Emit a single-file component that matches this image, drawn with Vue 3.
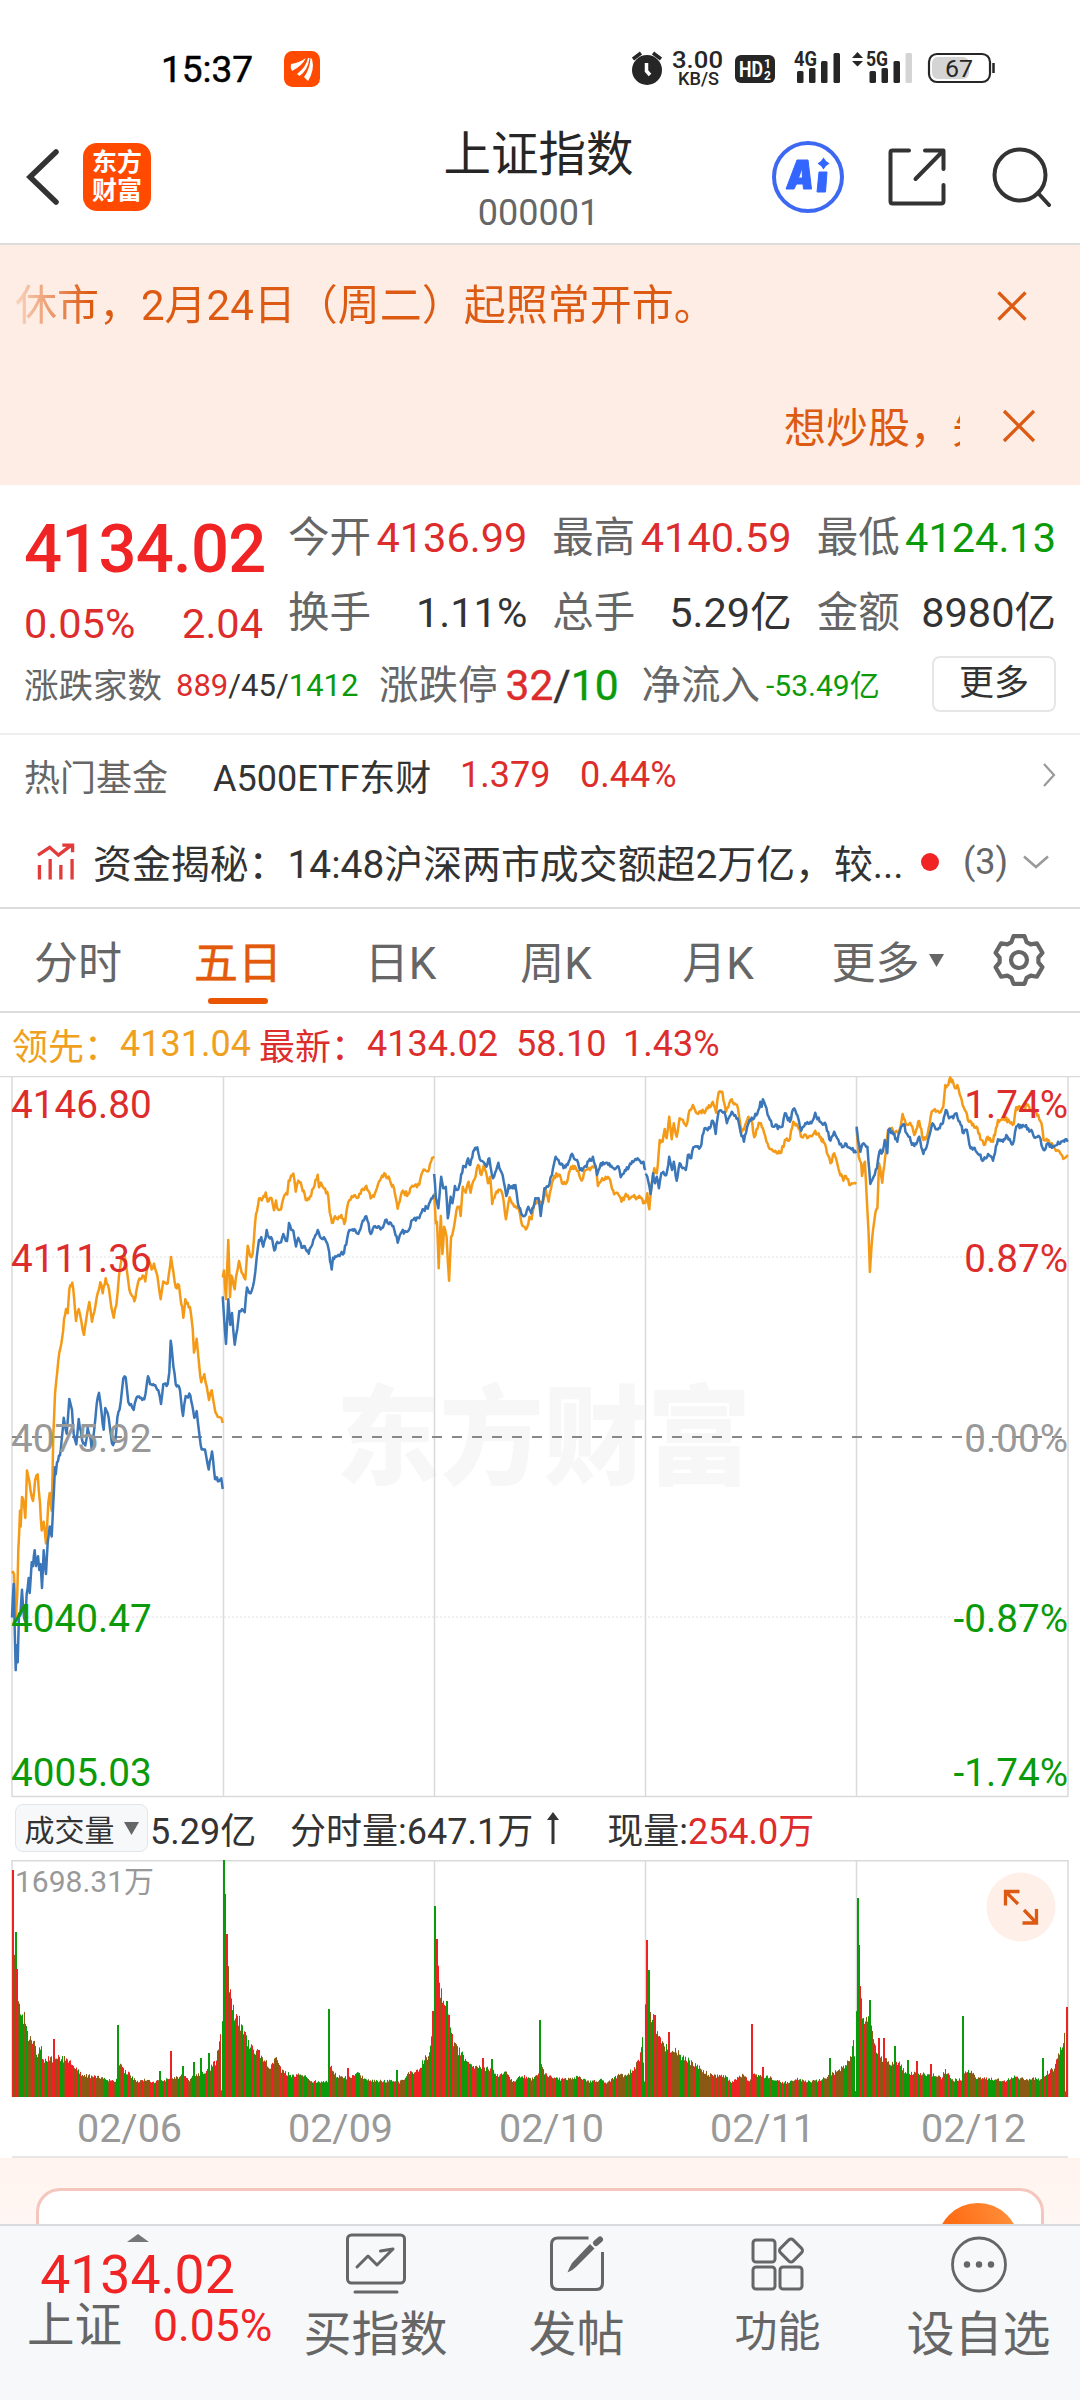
<script setup>
const quotes = [
  { label: "今开", value: "4136.99", tone: "up" },
  { label: "最高", value: "4140.59", tone: "up" },
  { label: "最低", value: "4124.13", tone: "down" },
  { label: "换手", value: "1.11%", tone: "" },
  { label: "总手", value: "5.29亿", tone: "" },
  { label: "金额", value: "8980亿", tone: "" },
];

const tabs = ["分时", "五日", "日K", "周K", "月K"];
const activeTab = "五日";

const axisLeft = [
  { text: "4146.80", tone: "up" },
  { text: "4111.36", tone: "up" },
  { text: "4075.92", tone: "flat" },
  { text: "4040.47", tone: "down" },
  { text: "4005.03", tone: "down" },
];
const axisRight = [
  { text: "1.74%", tone: "up" },
  { text: "0.87%", tone: "up" },
  { text: "0.00%", tone: "flat" },
  { text: "-0.87%", tone: "down" },
  { text: "-1.74%", tone: "down" },
];
const dates = ["02/06", "02/09", "02/10", "02/11", "02/12"];
const dayLines = [223.5, 434.5, 645.5, 856.5];

// small repeatable noise, so the curves look like minute data
function noise(i) {
  const v = Math.sin(i * 127.1 + 11.7) * 43758.5453;
  return v - Math.floor(v);
}

const early = { x: 0, y: -16, sx: 1 / 3, sy: 0.3954 };
const late = { x: 430, y: -16, sx: 0.4146, sy: 1 / 3 };

const leadDays = [
  [early, "36,1298 42,1300 48,1408 52,1350 55,1240 60,1140 62,1180 66,1105 72,1125 76,1158 81,1038 88,1065 92,1092 99,1115 105,1065 113,1048 120,1120 125,1190 131,1168 138,1223 145,1120 149,1095 155,1140 160,950 165,845 175,760 187,700 192,655 198,630 203,640 208,580 217,563 222,600 228,660 236,630 244,660 252,695 258,660 268,612 276,662 290,600 301,562 308,590 317,552 327,580 334,625 341,652 349,620 357,545 365,500 373,490 380,530 388,580 403,610 415,560 428,545 436,560 445,500 455,530 462,515 472,545 482,605 490,560 503,565 513,498 527,575 537,570 550,652 556,605 570,625 578,680 582,740 590,705 598,775 604,815 613,795 627,860 635,835 646,890 657,903 664,905 668,918"],
  [early, "668,550 672,532 678,605 685,455 690,600 694,545 704,580 710,540 717,508 725,538 736,555 743,470 750,495 758,490 768,390 777,350 785,355 797,335 803,358 815,350 822,380 828,355 834,378 843,378 852,345 862,340 866,305 880,287 887,333 895,305 905,320 914,340 921,355 930,345 940,325 953,290 957,322 963,310 975,325 985,345 989,385 996,412 1005,395 1013,403 1024,392 1033,415 1045,360 1058,347 1075,348 1085,328 1099,318 1112,350 1125,337 1140,305 1156,288 1170,305 1182,325 1193,376 1205,335 1225,338 1237,318 1258,315 1268,282 1283,282 1297,247 1303,245"],
  [late, "10,400 14,490 17,485 21,625 26,468 30,582 34,500 40,530 46,662 51,530 58,500 64,450 71,440 74,468 79,380 86,398 93,365 98,398 104,365 110,350 116,315 124,345 130,315 140,370 145,350 150,432 158,402 168,390 175,405 183,478 192,412 203,440 212,440 220,485 228,500 234,503 240,470 245,478 252,430 260,420 266,425 272,430 279,388 286,425 292,385 299,348 313,345 321,372 330,368 340,320 352,325 366,362 375,330 400,320 405,378 415,355 432,355 444,403 455,405 462,425 470,408 485,412 500,412 512,418 519,432"],
  [late, "519,430 524,400 529,448 535,370 541,325 547,340 554,240 561,245 566,207 571,235 577,170 583,238 588,190 595,230 602,175 610,180 618,198 624,160 634,135 647,162 660,155 670,145 682,125 690,158 696,98 705,95 714,155 722,130 728,118 735,130 743,145 752,215 760,195 768,170 775,180 782,232 793,188 803,205 817,262 830,275 847,278 856,240 868,238 876,185 887,200 897,232 915,228 929,212 940,232 952,250 966,310 975,280 985,325 997,362 1003,348 1014,375 1028,372"],
  [late, "1029,205 1034,290 1040,310 1042,348 1049,305 1054,430 1058,520 1061,636 1066,540 1074,460 1079,445 1083,310 1091,368 1098,290 1105,210 1112,205 1120,220 1130,218 1135,200 1140,162 1150,195 1158,188 1168,225 1180,183 1190,240 1200,225 1210,155 1220,155 1229,158 1238,140 1243,75 1250,75 1255,52 1265,82 1272,75 1280,110 1290,150 1300,185 1318,200 1330,240 1336,255 1345,230 1358,245 1370,180 1385,172 1400,190 1408,192 1414,142 1430,150 1440,135 1452,150 1462,155 1475,190 1480,240 1492,240 1505,262 1520,280 1530,295 1538,285"],
];

const priceDays = [
  [early, "36,1410 41,1325 44,1440 47,1543 50,1480 53,1523 57,1400 61,1405 66,1340 72,1410 76,1420 80,1350 86,1310 89,1348 95,1270 99,1280 104,1240 108,1280 114,1255 118,1290 122,1275 126,1335 131,1240 138,1300 143,1220 149,1180 155,1205 160,1120 165,1030 167,1048 171,1018 180,1000 185,960 191,905 200,945 208,857 216,885 221,945 229,972 236,908 246,960 256,975 263,930 270,950 275,985 282,940 290,870 297,842 305,895 311,935 316,880 326,905 336,970 346,965 352,905 362,865 370,805 377,803 385,865 393,870 401,885 408,858 420,855 433,858 444,800 450,820 460,820 475,835 483,870 490,820 503,820 508,790 512,710 517,745 527,820 540,835 549,900 557,850 571,848 583,905 590,888 600,960 605,985 615,985 626,1036 636,990 645,1060 660,1062 664,1058 668,1085"],
  [early, "668,598 678,718 685,605 691,670 696,640 704,720 712,680 718,635 726,630 734,638 741,575 752,590 762,560 770,500 777,455 784,448 790,472 800,430 806,448 817,455 823,482 832,460 840,462 850,440 861,458 867,412 874,430 880,432 888,472 895,450 908,475 917,478 926,490 940,455 953,430 962,450 975,452 985,475 990,508 995,530 999,500 1015,493 1032,488 1045,437 1060,432 1075,440 1085,415 1099,395 1112,440 1125,420 1145,425 1156,405 1180,420 1193,462 1205,435 1225,432 1237,405 1258,400 1268,377 1280,375 1297,350 1303,345"],
  [late, "10,342 14,412 20,445 27,350 32,385 38,380 43,475 50,410 54,430 60,378 66,390 73,365 80,318 86,322 92,295 97,315 104,275 114,262 120,298 128,305 136,320 143,295 152,355 165,308 175,345 184,408 190,375 199,385 206,375 212,430 220,460 228,468 237,440 244,460 254,415 262,415 267,468 276,385 285,380 294,345 303,290 310,300 322,325 332,315 340,285 352,300 362,330 375,318 393,290 403,345 412,310 430,315 445,328 455,320 460,352 470,330 485,312 498,300 515,305 519,330"],
  [late, "519,345 524,350 532,402 538,340 543,370 547,350 552,385 558,340 570,345 577,290 584,330 588,305 595,362 602,310 609,325 617,330 622,285 630,295 635,262 652,262 662,205 675,205 682,182 689,222 696,155 710,155 716,190 728,155 742,175 749,215 757,245 765,200 773,182 782,175 792,150 797,125 800,140 803,118 817,170 828,200 850,200 856,160 868,185 876,148 886,165 895,212 905,190 920,190 929,158 940,185 952,188 966,242 975,215 985,240 994,262 1002,250 1014,265 1025,272 1028,280"],
  [late, "1029,200 1033,245 1038,275 1046,250 1055,260 1062,372 1070,350 1078,325 1084,275 1092,275 1097,240 1103,280 1106,210 1115,215 1127,245 1133,215 1142,192 1152,225 1168,258 1180,230 1190,282 1200,250 1212,190 1222,208 1237,190 1244,150 1252,175 1262,175 1270,160 1280,195 1287,220 1295,210 1304,265 1316,272 1325,285 1335,300 1346,282 1358,302 1370,238 1382,245 1390,225 1406,252 1414,200 1430,195 1443,205 1455,225 1470,230 1480,270 1490,250 1505,260 1515,245 1530,245 1538,245"],
];

function toLine([box, raw], seed) {
  const pts = raw.split(" ").map((p) => {
    const [x, y] = p.split(",").map(Number);
    return [box.x + x * box.sx, box.y + y * box.sy];
  });
  const out = [pts[0]];
  for (let i = 1; i < pts.length; i++) {
    const [x0, y0] = pts[i - 1];
    const [x1, y1] = pts[i];
    const steps = Math.max(1, Math.round((x1 - x0) / 1.1));
    for (let s = 1; s < steps; s++) {
      const t = s / steps;
      const wobble = (noise(seed * 999 + i * 17 + s) - 0.5) * 5;
      out.push([x0 + (x1 - x0) * t, y0 + (y1 - y0) * t + wobble]);
    }
    out.push([x1, y1]);
  }
  return out.map(([x, y]) => `${x.toFixed(1)},${y.toFixed(1)}`).join(" ");
}

const leadLines = leadDays.map((d, i) => toLine(d, i + 1));
const priceLines = priceDays.map((d, i) => toLine(d, i + 21));

// volume envelope: x,height
const volumeProfile =
  "35,93 38,153 42,153 45,150 48,128 51,107 54,100 58,87 63,78 68,79 75,73 80,57 100,55 106,43 118,48 125,38 155,37 170,40 190,37 215,32 235,22 280,20 320,16 341,17 347,33 360,26 375,23 395,15 425,18 445,15 480,17 500,19 530,21 550,16 562,22 585,24 605,27 625,35 635,50 638,61 641,61 642,3 644,3 645,92 650,237 654,198 657,143 660,143 664,120 668,103 675,88 682,79 690,79 700,70 712,58 730,48 750,43 770,35 785,30 800,40 815,27 840,22 880,22 900,16 945,15 953,16 960,31 975,21 1010,19 1035,24 1060,17 1100,16 1145,16 1160,15 1185,23 1210,26 1230,36 1245,43 1250,60 1254,62 1255,3 1257,3 1258,86 1263,150 1268,145 1272,135 1278,103 1285,97 1290,87 1297,88 1304,80 1310,60 1325,48 1345,41 1365,31 1400,30 1430,26 1445,21 1470,24 1490,15 1510,21 1545,18 1565,23 1573,33 1580,23 1608,18 1643,18 1678,20 1713,15 1748,17 1763,14 1800,23 1818,21 1843,30 1856,37 1864,55 1867,55 1868,3 1870,3 1872,86 1877,120 1883,120 1885,97 1893,75 1902,78 1905,67 1918,53 1943,48 1963,45 1988,38 2013,33 2033,28 2058,22 2108,20 2123,15 2153,22 2180,16 2188,22 2228,20 2258,16 2288,14 2313,18 2343,15 2368,16 2403,20 2418,23 2448,30 2468,37 2477,53 2480,53 2481,3 2483,3 2485,82 2490,128 2495,128 2498,98 2504,83 2513,77 2525,90 2530,68 2538,50 2553,40 2566,38 2583,33 2613,33 2628,23 2663,25 2688,22 2718,22 2733,18 2743,27 2763,17 2794,17 2800,23 2818,26 2838,18 2893,18 2913,15 2943,20 2978,18 3018,18 3033,23 3058,28 3073,42 3085,50 3091,62 3093,3 3095,3 3097,90 3101,90"
    .split(" ")
    .map((p) => p.split(",").map(Number));
const spikes = [
  { x: 38, h: 227, up: true },
  { x: 45, h: 165, up: false },
  { x: 48, h: 128, up: true },
  { x: 157, h: 58, up: true },
  { x: 343, h: 72, up: false },
  { x: 464, h: 26, up: false },
  { x: 495, h: 46, up: true },
  { x: 530, h: 31, up: false },
  { x: 563, h: 35, up: false },
  { x: 584, h: 39, up: false },
  { x: 605, h: 44, up: false },
  { x: 654, h: 198, up: false },
  { x: 651, h: 237, up: false },
  { x: 660, h: 163, up: true },
  { x: 712, h: 65, up: true },
  { x: 753, h: 47, up: true },
  { x: 955, h: 88, up: false },
  { x: 1010, h: 29, up: true },
  { x: 1151, h: 27, up: false },
  { x: 1258, h: 86, up: true },
  { x: 1263, h: 191, up: false },
  { x: 1269, h: 158, up: true },
  { x: 1298, h: 96, up: false },
  { x: 1304, h: 82, up: true },
  { x: 1401, h: 39, up: true },
  { x: 1429, h: 38, up: false },
  { x: 1569, h: 77, up: false },
  { x: 1877, h: 157, up: true },
  { x: 1883, h: 127, up: false },
  { x: 1902, h: 82, up: true },
  { x: 1943, h: 65, up: true },
  { x: 2182, h: 73, up: true },
  { x: 2215, h: 30, up: true },
  { x: 2411, h: 39, up: false },
  { x: 2490, h: 199, up: false },
  { x: 2495, h: 152, up: false },
  { x: 2525, h: 97, up: false },
  { x: 2551, h: 59, up: true },
  { x: 2566, h: 59, up: true },
  { x: 2598, h: 51, up: false },
  { x: 2636, h: 37, up: false },
  { x: 2661, h: 36, up: true },
  { x: 2703, h: 33, up: true },
  { x: 2796, h: 81, up: false },
  { x: 3027, h: 39, up: false },
  { x: 3098, h: 90, up: true },
];

const RED = "#ee2222";
const GREEN = "#0a9a0a";
const MIXED = "#8a5a14";

function buildVolume() {
  const bars = [];
  let k = 0;
  for (let n = 0; n < 1055; n++) {
    const px = 35 + n * 2.904;
    while (k < volumeProfile.length - 2 && volumeProfile[k + 1][0] < px) k++;
    const [x0, h0] = volumeProfile[k];
    const [x1, h1] = volumeProfile[k + 1];
    const t = Math.min(1, (px - x0) / (x1 - x0));
    let h = h0 + (h1 - h0) * t;
    if (h > 8) h *= 0.9 + noise(n + 400) * 0.2;
    const trend = noise(Math.floor(n / 7) + 70) * 0.24 - 0.12;
    const pick = noise(n) + trend;
    const fill = pick < 0.3 ? RED : pick > 0.7 ? GREEN : MIXED;
    bars.push({ x: 12 + n, h: Math.min(237, h), w: 1, fill });
  }
  for (const s of spikes) {
    bars.push({ x: Math.round(s.x / 2.904 - 0.8), h: s.h, w: 2, fill: s.up ? RED : GREEN });
  }
  return bars;
}
const volumeBars = buildVolume();

function gearPath() {
  const pts = [];
  for (let k = 0; k < 6; k++) {
    for (const [r, d] of [[19.5, -23], [24.5, -13], [24.5, 13], [19.5, 23]]) {
      const a = ((k * 60 - 90 + d) * Math.PI) / 180;
      pts.push(`${(28 + r * Math.cos(a)).toFixed(1)} ${(28 + r * Math.sin(a)).toFixed(1)}`);
    }
  }
  return `M${pts.join("L")}Z`;
}
const gear = gearPath();
</script>

<template>
  <div class="page">
    <div class="status-bar">
      <span class="clock">15:37</span>
      <svg class="push-icon" viewBox="0 0 36 36">
        <rect width="36" height="36" rx="8.5" fill="#ff4a00" />
        <path d="M7 13Q15 12 22 7Q18 15 8 20Q6 17 7 13Z" fill="#fff" />
        <path d="M24 7Q22 16 13 23L15.500 25Q24 19 25.500 7Z" fill="#fff" />
        <path d="M26.500 7Q26 18 20 26L24 30Q31 19 28 8Z" fill="#fff" />
      </svg>
      <svg class="status-icons" viewBox="632 40 364 60">
        <g fill="#262626">
          <circle cx="647" cy="71" r="15" />
          <path d="M633 60L641 54M661 60L653 54" stroke="#262626" stroke-width="3.500" />
          <path d="M646.500 64V72L650 76" stroke="#fff" stroke-width="3.500" fill="none" />
          <text x="672" y="69" font-size="24" font-weight="500" textLength="51" lengthAdjust="spacingAndGlyphs">3.00</text>
          <text x="678" y="86" font-size="17.500" font-weight="500" textLength="41" lengthAdjust="spacingAndGlyphs">KB/S</text>
          <rect x="735" y="56" width="40" height="28" rx="6" />
          <text x="739" y="78" font-size="22" font-weight="700" fill="#fff" textLength="24" lengthAdjust="spacingAndGlyphs">HD</text>
          <text x="764" y="69" font-size="12" font-weight="700" fill="#fff">1</text>
          <text x="764" y="81" font-size="12" font-weight="700" fill="#fff">2</text>
          <text x="794" y="67" font-size="20" font-weight="700" textLength="23" lengthAdjust="spacingAndGlyphs">4G</text>
          <rect x="797" y="72" width="6.500" height="12" rx="1.500" />
          <rect x="809" y="69" width="6.500" height="15" rx="1.500" />
          <rect x="821" y="62" width="6.500" height="22" rx="1.500" />
          <rect x="833.500" y="54" width="6.500" height="30" rx="1.500" />
          <path d="M852 59L857.500 53L863 59ZM852 62L857.500 67.500L863 62Z" />
          <text x="866" y="67" font-size="20" font-weight="700" textLength="22" lengthAdjust="spacingAndGlyphs">5G</text>
          <rect x="869.500" y="72" width="6.500" height="12" rx="1.500" />
          <rect x="881.500" y="69" width="6.500" height="15" rx="1.500" />
          <rect x="893.500" y="62" width="6.500" height="22" rx="1.500" />
          <rect x="905.500" y="54" width="6.500" height="30" rx="1.500" fill="#d4d4d4" />
          <rect x="932" y="58" width="37" height="22" rx="6" fill="#d4d4d4" />
          <rect x="929" y="55" width="61" height="28" rx="8" fill="none" stroke="#262626" stroke-width="2.200" />
          <path d="M993.500 64V74" stroke="#262626" stroke-width="2.500" />
          <text x="945" y="78" font-size="24" textLength="28" lengthAdjust="spacingAndGlyphs">67</text>
        </g>
      </svg>
    </div>

    <header class="header">
      <div class="header-side">
        <svg class="back" viewBox="0 0 36 60">
          <path d="M31 5L5 30L31 55" fill="none" stroke="#333" stroke-width="5.500" stroke-linecap="round" />
        </svg>
        <div class="brand">
          <span>东方</span>
          <span>财富</span>
        </div>
      </div>
      <div class="title-box">
        <h1 class="title">上证指数</h1>
        <span class="code">000001</span>
      </div>
      <div class="header-side header-actions">
        <svg width="72" height="72" viewBox="0 0 72 72">
          <circle cx="36" cy="36" r="34" fill="none" stroke="#3d68f2" stroke-width="4" />
          <path d="M25 19H36L39.500 48H31.500L31 43H24.500L22 48H14ZM30 27L26.500 37H30.500Z" fill="#3366ff" fill-rule="evenodd" stroke="#3366ff" stroke-linejoin="round" />
          <path d="M47 31H55L53.500 51H45Z" fill="#3366ff" stroke="#3366ff" stroke-linejoin="round" />
          <path d="M51.500 16.500L54 20L57.500 22.500L54 25L51.500 28.500L49 25L45.500 22.500L49 20Z" fill="#3366ff" />
        </svg>
        <svg width="58" height="58" viewBox="0 0 58 58" fill="none" stroke="#333" stroke-width="4" stroke-linecap="round" stroke-linejoin="round">
          <path d="M21 2.500H4.500Q2.500 2.500 2.500 4.500V53Q2.500 55.500 4.500 55.500H53Q55.500 55.500 55.500 53V37" />
          <path d="M37 2.500H55.500V21M54 4L27.500 31" />
        </svg>
        <svg width="60" height="60" viewBox="0 0 60 60" fill="none" stroke="#333" stroke-width="4" stroke-linecap="round">
          <circle cx="28" cy="28" r="25.500" />
          <path d="M46 46L57 58" />
        </svg>
      </div>
    </header>

    <section class="notices">
      <div class="notice notice-first">
        <span class="notice-text">休市，2月24日（周二）起照常开市。</span>
        <svg width="30" height="30" viewBox="0 0 30 30"><path d="M1.500 1.500L28.500 28.500M28.500 1.500L1.500 28.500" stroke="#dd5a12" stroke-width="3.300" /></svg>
      </div>
      <div class="notice notice-second">
        <span class="notice-text">想炒股，先开户</span>
        <svg class="notice-close" width="34" height="34" viewBox="0 0 34 34"><path d="M2 2L32 32M32 2L2 32" stroke="#dd5a12" stroke-width="3.300" /></svg>
      </div>
    </section>

    <section class="summary">
      <div class="quote">
        <div class="last">
          <strong class="last-price">4134.02</strong>
          <div class="last-change"><span>0.05%</span><span>2.04</span></div>
        </div>
        <div class="quote-grid">
          <div v-for="q in quotes" :key="q.label" class="quote-cell">
            <span class="quote-label">{{ q.label }}</span>
            <span :class="q.tone">{{ q.value }}</span>
          </div>
        </div>
      </div>
      <div class="breadth">
        <span class="breadth-label small">涨跌家数</span>
        <span class="counts"><i class="up">889</i>/45/<i class="down">1412</i></span>
        <span class="breadth-label">涨跌停</span>
        <span class="limits"><i class="up">32</i>/<i class="down">10</i></span>
        <span class="breadth-label">净流入</span>
        <span class="inflow down">-53.49亿</span>
        <button class="more-btn" type="button">更多</button>
      </div>
    </section>

    <div class="fund">
      <span class="fund-label">热门基金</span>
      <span class="fund-name">A500ETF东财</span>
      <span class="fund-price up">1.379</span>
      <span class="up">0.44%</span>
      <svg class="fund-arrow" width="14" height="24" viewBox="0 0 14 24"><path d="M2 1L12 12L2 23" fill="none" stroke="#999" stroke-width="2.200" /></svg>
    </div>

    <div class="news">
      <svg width="38" height="38" viewBox="0 0 39 38" fill="none" stroke="#e33a3a" stroke-width="3.400">
        <path d="M2.500 37V22M13.500 37V16M24.500 37V22M36 37V16" />
        <path d="M1 12L13 4L22 12L35 2M26 1.700H36.500V9" />
      </svg>
      <span class="news-text">资金揭秘：14:48沪深两市成交额超2万亿，较...</span>
      <span class="news-dot" />
      <span class="news-count">(3)</span>
      <svg class="news-arrow" width="26" height="14" viewBox="0 0 26 14"><path d="M1 1.500L13 12L25 1.500" fill="none" stroke="#999" stroke-width="2.500" /></svg>
    </div>

    <nav class="tabs">
      <span v-for="t in tabs" :key="t" class="tab" :class="{ active: t === activeTab }">{{ t }}</span>
      <span class="tab tab-more">更多<svg width="15" height="13" viewBox="0 0 15 13"><path d="M0 0H15L7.500 13Z" fill="#666" /></svg></span>
      <svg class="gear" width="56" height="56" viewBox="0 0 56 56" fill="none" stroke="#666" stroke-width="4.200" stroke-linejoin="round">
        <path :d="gear" />
        <circle cx="28" cy="28" r="8" />
      </svg>
    </nav>

    <div class="legend">
      <span class="lead">领先：</span><span class="lead legend-price">4131.04</span>
      <span class="up">最新：</span><span class="up legend-now">4134.02</span>
      <span class="up legend-diff">58.10</span>
      <span class="up">1.43%</span>
    </div>

    <div class="chart">
      <svg class="chart-svg" width="1080" height="722" viewBox="0 0 1080 722">
        <text class="watermark" x="336" y="400" textLength="415" lengthAdjust="spacingAndGlyphs">东方财富</text>
        <g stroke="#dadada" stroke-width="1.500">
          <path d="M0 .5H1080M12 720.500H1068" />
          <path v-for="x in [12, ...dayLines, 1068]" :key="x" :d="`M${x} 1V721`" />
        </g>
        <path d="M12 181H1068M12 541H1068" stroke="#e0e0e0" stroke-dasharray="2 2" />
        <path d="M12 361H1068" stroke="#888" stroke-width="2" stroke-dasharray="10 10" />
        <g fill="none" stroke="#f59a16" stroke-width="2.500" stroke-linejoin="round">
          <polyline v-for="(p, i) in leadLines" :key="i" :points="p" />
        </g>
        <g fill="none" stroke="#3a76b8" stroke-width="2.500" stroke-linejoin="round">
          <polyline v-for="(p, i) in priceLines" :key="i" :points="p" />
        </g>
      </svg>
      <div class="axis axis-left">
        <span v-for="a in axisLeft" :key="a.text" :class="a.tone">{{ a.text }}</span>
      </div>
      <div class="axis axis-right">
        <span v-for="a in axisRight" :key="a.text" :class="a.tone">{{ a.text }}</span>
      </div>
    </div>

    <div class="volume-head">
      <span class="volume-chip">成交量<svg width="15" height="13" viewBox="0 0 15 13"><path d="M0 0H15L7.500 13Z" fill="#666" /></svg></span>
      <span class="volume-total">5.29亿</span>
      <span>分时量:647.1万</span>
      <svg class="volume-up" width="12" height="32" viewBox="0 0 12 32"><path d="M6 32V4" stroke="#333" stroke-width="3" /><path d="M0 8L6 0L12 8Z" fill="#333" /></svg>
      <span>现量:<i class="up">254.0万</i></span>
    </div>

    <div class="volume">
      <svg class="chart-svg" width="1080" height="238" viewBox="0 0 1080 238">
        <g stroke="#dadada" stroke-width="1.500">
          <path d="M12 .7H1068" />
          <path v-for="x in [12, ...dayLines, 1068]" :key="x" :d="`M${x} 0V237`" />
        </g>
        <rect
          v-for="(b, i) in volumeBars"
          :key="i"
          :x="b.x"
          :y="237 - b.h"
          :width="b.w"
          :height="b.h"
          :fill="b.fill"
        />
      </svg>
      <span class="volume-max">1698.31万</span>
      <svg class="expand" width="70" height="70" viewBox="0 0 70 70">
        <circle cx="35" cy="35" r="34.500" fill="#fef0e8" />
        <path d="M19.500 33.500V19.500H33.500M20 20L32 32M36.500 51H50.500V37M50 50.500L38 38" fill="none" stroke="#dd5a12" stroke-width="3.300" />
      </svg>
    </div>

    <div class="dates">
      <span v-for="d in dates" :key="d">{{ d }}</span>
    </div>

    <div class="promo">
      <div class="promo-card"><span class="promo-ball" /></div>
    </div>

    <footer class="bottom-nav">
      <div class="nav-index">
        <svg width="22" height="8" viewBox="0 0 22 8"><path d="M0 8L11 0L22 8Z" fill="#777" /></svg>
        <span class="nav-price">4134.02</span>
        <div class="nav-row"><span>上证</span><span class="nav-pct">0.05%</span></div>
      </div>
      <div class="nav-item">
        <svg width="62" height="62" viewBox="0 0 62 62" fill="none" stroke="#666" stroke-width="3" stroke-linecap="round" stroke-linejoin="round">
          <rect x="2.500" y="2" width="57" height="48" rx="4" />
          <path d="M12 34L23 23L32 32L48 16M35.500 18L48 16" />
          <path d="M10 59H52" />
        </svg>
        <span>买指数</span>
      </div>
      <div class="nav-item">
        <svg width="62" height="62" viewBox="0 0 62 62" fill="none" stroke="#666" stroke-width="3">
          <path d="M42.500 5H12Q5.500 5 5.500 11.500V50Q5.500 56.500 12 56.500H50Q56.500 56.500 56.500 50V19" />
          <path d="M44 11L48.500 15.500L30 34Q26 38 21.500 39.500Q23 35 26 30Z" fill="#666" stroke="none" />
          <path d="M50 10L54 6.500" stroke-width="6" stroke-linecap="round" />
        </svg>
        <span>发帖</span>
      </div>
      <div class="nav-item nav-small">
        <svg width="62" height="62" viewBox="0 0 62 62" fill="none" stroke="#666" stroke-width="3">
          <rect x="6" y="7" width="22" height="22" rx="3" />
          <rect x="6" y="34" width="22" height="22" rx="3" />
          <rect x="33" y="34" width="22" height="22" rx="3" />
          <rect x="35" y="8.500" width="18" height="18" rx="3" transform="rotate(45 44 17.500)" />
        </svg>
        <span>功能</span>
      </div>
      <div class="nav-item">
        <svg width="62" height="62" viewBox="0 0 62 62">
          <circle cx="31" cy="31.500" r="26.500" fill="none" stroke="#666" stroke-width="2.800" />
          <g fill="#666"><circle cx="19" cy="31.500" r="3.200" /><circle cx="31" cy="31.500" r="3.200" /><circle cx="43" cy="31.500" r="3.200" /></g>
        </svg>
        <span>设自选</span>
      </div>
    </footer>
  </div>
</template>

<style>
body {
  margin: 0;
  background: #fff;
}
</style>

<style scoped>
.page {
  width: 1080px;
  height: 2400px;
  overflow: hidden;
  display: flex;
  flex-direction: column;
  background: #fff;
  color: #333;
  font-family: Roboto, "Noto Sans CJK SC", sans-serif;
  white-space: nowrap;
}

.page > * {
  box-sizing: border-box;
  flex-shrink: 0;
}

i {
  font-style: normal;
}

svg {
  display: block;
  flex-shrink: 0;
}

.up {
  color: #dd2c2c;
}

.down {
  color: #0a9a0a;
}

.flat {
  color: #999;
}

.status-bar {
  height: 110px;
  padding: 28px 84px 0 161px;
  display: flex;
  align-items: center;
}

.clock {
  width: 123px;
  padding-top: 2px;
  color: #000;
  font-size: 37px;
  line-height: 40px;
  -webkit-text-stroke: 0.5px #000;
}

.push-icon {
  width: 36px;
  height: 36px;
}

.status-icons {
  width: 364px;
  height: 60px;
  margin-left: auto;
}

.header {
  height: 135px;
  padding: 0 28px 0 25px;
  display: flex;
  justify-content: space-between;
  border-bottom: 2px solid #dcdcdc;
}

.header-side {
  width: 280px;
  height: 134px;
  display: flex;
  align-items: center;
}

.back {
  width: 36px;
  height: 60px;
}

.brand {
  width: 68px;
  height: 68px;
  margin-left: 22px;
  display: flex;
  flex-direction: column;
  align-items: center;
  justify-content: center;
  border-radius: 14px;
  background: #ff4a00;
  color: #fff;
  font-size: 25px;
  font-weight: 700;
  line-height: 28px;
}

.title-box {
  display: flex;
  flex-direction: column;
  align-items: center;
}

.title {
  height: 62px;
  margin: 14px 0 0;
  color: #262626;
  font-size: 47.5px;
  font-weight: 400;
  line-height: 62px;
}

.code {
  margin-top: 7px;
  color: #666;
  font-size: 36px;
  line-height: 40px;
}

.header-actions {
  justify-content: flex-end;
  gap: 44px;
}

.header-actions svg:nth-child(2) {
  margin-right: 2px;
}

.notices {
  height: 240px;
  background: #fdede4;
  color: #dd5a12;
  font-size: 42px;
}

.notice {
  display: flex;
  align-items: center;
  justify-content: space-between;
  line-height: 60px;
}

.notice-first {
  height: 121px;
  padding: 0 53px 0 15px;
}

.notice-first .notice-text {
  background: linear-gradient(90deg, #f9d5bf, #dd5a12 75px);
  background-clip: text;
  color: transparent;
}

.notice-second {
  height: 119px;
  padding: 3px 44px 0 784px;
}

.notice-second .notice-text {
  width: 176px;
  overflow: hidden;
}

.notice-close {
  margin-bottom: 6px;
}

.summary {
  height: 250px;
  padding: 15px 24px 0;
  border-bottom: 2px solid #eee;
}

.quote {
  display: grid;
  grid-template-columns: 239px 1fr;
  column-gap: 25px;
  height: 150px;
}

.last {
  color: #f02424;
}

.last-price {
  display: block;
  height: 98px;
  font-size: 67px;
  font-weight: 500;
  line-height: 98px;
  letter-spacing: -0.8px;
}

.last-change {
  display: flex;
  justify-content: space-between;
  color: #dd2c2c;
  font-size: 41.5px;
  line-height: 52px;
}

.quote-grid {
  display: grid;
  grid-template-columns: repeat(3, 1fr);
  grid-auto-rows: 75px;
  column-gap: 25px;
}

.quote-cell {
  display: flex;
  justify-content: space-between;
  font-size: 41.5px;
  line-height: 75px;
}

.quote-label,
.breadth-label {
  color: #666;
}

.breadth {
  display: flex;
  align-items: center;
  height: 72px;
  line-height: 60px;
}

.breadth-label {
  font-size: 39.5px;
}

.breadth-label.small {
  font-size: 34.5px;
}

.counts {
  width: 203px;
  margin-left: 14px;
  font-size: 31px;
}

.limits {
  width: 136px;
  margin-left: 8px;
  font-size: 42.5px;
  -webkit-text-stroke: 0.4px;
}

.inflow {
  margin-left: 6px;
  font-size: 30px;
}

.more-btn {
  width: 124px;
  height: 56px;
  margin: -4px 0 0 auto;
  padding: 0;
  border: 2px solid #e6e6e6;
  border-radius: 8px;
  background: #fff;
  color: #333;
  font-family: inherit;
  font-size: 35px;
  line-height: 50px;
}

.fund {
  height: 80px;
  margin-bottom: 2px;
  padding: 0 24px 0 24px;
  display: flex;
  align-items: center;
  font-size: 36px;
}

.fund-label {
  width: 189px;
  color: #666;
}

.fund-name {
  width: 247px;
}

.fund-price {
  width: 120px;
}

.fund-arrow {
  margin-left: auto;
}

.news {
  height: 92px;
  padding: 0 31px 0 37px;
  display: flex;
  align-items: center;
  border-bottom: 2px solid #dcdcdc;
  font-size: 38.9px;
}

.news-text {
  width: 828px;
  margin: -3px 0 0 18px;
}

.news-dot {
  width: 18px;
  height: 18px;
  border-radius: 50%;
  background: #f02424;
}

.news-count {
  margin-left: 24px;
  color: #666;
  font-size: 36px;
}

.news-arrow {
  margin-left: auto;
}

.tabs {
  height: 104px;
  display: grid;
  grid-template-columns: 156px 164px 161px 150px 174px 165px 98px;
  align-items: center;
  justify-items: center;
  border-bottom: 2px solid #dcdcdc;
  color: #666;
  font-size: 44px;
}

.tab {
  height: 102px;
  display: flex;
  align-items: center;
  box-sizing: border-box;
}

.tab-more {
  gap: 9px;
}

.tab.active {
  position: relative;
  color: #e35a0b;
  -webkit-text-stroke: 0.5px #e35a0b;
}

.tab.active::after {
  content: "";
  position: absolute;
  left: 50%;
  bottom: 7px;
  width: 60px;
  height: 6px;
  margin-left: -30px;
  border-radius: 3px;
  background: #ea5504;
}

.legend {
  height: 62px;
  padding-left: 12px;
  display: flex;
  align-items: center;
  font-size: 36px;
}

.lead {
  color: #f0a020;
}

.legend-price {
  width: 139px;
}

.legend-now {
  width: 149px;
}

.legend-diff {
  width: 107px;
}

.chart,
.volume {
  position: relative;
}

.chart {
  height: 723px;
  margin-top: 1px;
}

.watermark {
  fill: #f7f7f7;
  font-size: 108px;
  font-weight: 900;
}

.axis {
  position: absolute;
  top: 7px;
  font-size: 38.7px;
  line-height: 44px;
}

.axis span {
  display: block;
}

.axis-left {
  left: 11px;
}

.axis-right {
  right: 12px;
  text-align: right;
}

.axis span:nth-child(2) {
  margin-top: 110px;
}

.axis span:nth-child(3),
.axis span:nth-child(4) {
  margin-top: 136px;
}

.axis span:nth-child(5) {
  margin-top: 110px;
}

.volume-head {
  height: 58px;
  margin-bottom: 3px;
  padding-left: 15px;
  display: flex;
  align-items: center;
  font-size: 36px;
}

.volume-chip {
  width: 133px;
  height: 48px;
  box-sizing: border-box;
  display: flex;
  align-items: center;
  justify-content: center;
  gap: 9px;
  border: 1px solid #e3e5e8;
  border-radius: 8px;
  background: #f6f8fa;
  font-size: 30px;
}

.volume-total {
  width: 140px;
  margin-left: 2px;
}

.volume-up {
  margin: 0 48px 0 14px;
}

.volume {
  height: 238px;
}

.volume-max {
  position: absolute;
  left: 15px;
  top: 4px;
  color: #999;
  font-size: 30px;
  line-height: 36px;
}

.expand {
  position: absolute;
  left: 986px;
  top: 12px;
}

.dates {
  height: 60px;
  margin: 0 12px;
  padding-left: 12px;
  display: grid;
  grid-template-columns: repeat(5, 211px);
  border-bottom: 2px solid #e6e6e6;
  color: #999;
  font-size: 39.5px;
  line-height: 61px;
  text-align: center;
}

.promo {
  height: 66px;
  padding: 30px 36px 0;
  overflow: hidden;
  background: linear-gradient(#fff3ee, #fff7f4);
}

.promo-card {
  height: 120px;
  padding: 12px 22px;
  display: flex;
  justify-content: flex-end;
  border: 3px solid #f5c6bd;
  border-radius: 24px;
  background: #fff;
}

.promo-ball {
  width: 82px;
  height: 82px;
  border-radius: 50%;
  background: linear-gradient(70deg, #ff5a00, #ff9440);
}

.bottom-nav {
  height: 176px;
  display: grid;
  grid-template-columns: 275px repeat(4, 201px);
  border-top: 2px solid #d8dade;
  background: #f7f8fa;
  color: #666;
}

.nav-index {
  padding-top: 8px;
  display: flex;
  flex-direction: column;
  align-items: center;
  color: #f02424;
}

.nav-price {
  margin-top: 6px;
  font-size: 53.5px;
  line-height: 54px;
}

.nav-row {
  align-self: stretch;
  display: flex;
  padding-left: 27px;
  color: #666;
  font-size: 47.5px;
  line-height: 48px;
}

.nav-pct {
  margin-left: 31px;
  color: #f02424;
  font-size: 44.5px;
}

.nav-item {
  padding-top: 7px;
  display: flex;
  flex-direction: column;
  align-items: center;
  font-size: 48px;
  line-height: 60px;
}

.nav-item span {
  margin-top: 10px;
}

.nav-small {
  font-size: 43px;
}

.nav-small span {
  margin-top: 7px;
}
</style>
